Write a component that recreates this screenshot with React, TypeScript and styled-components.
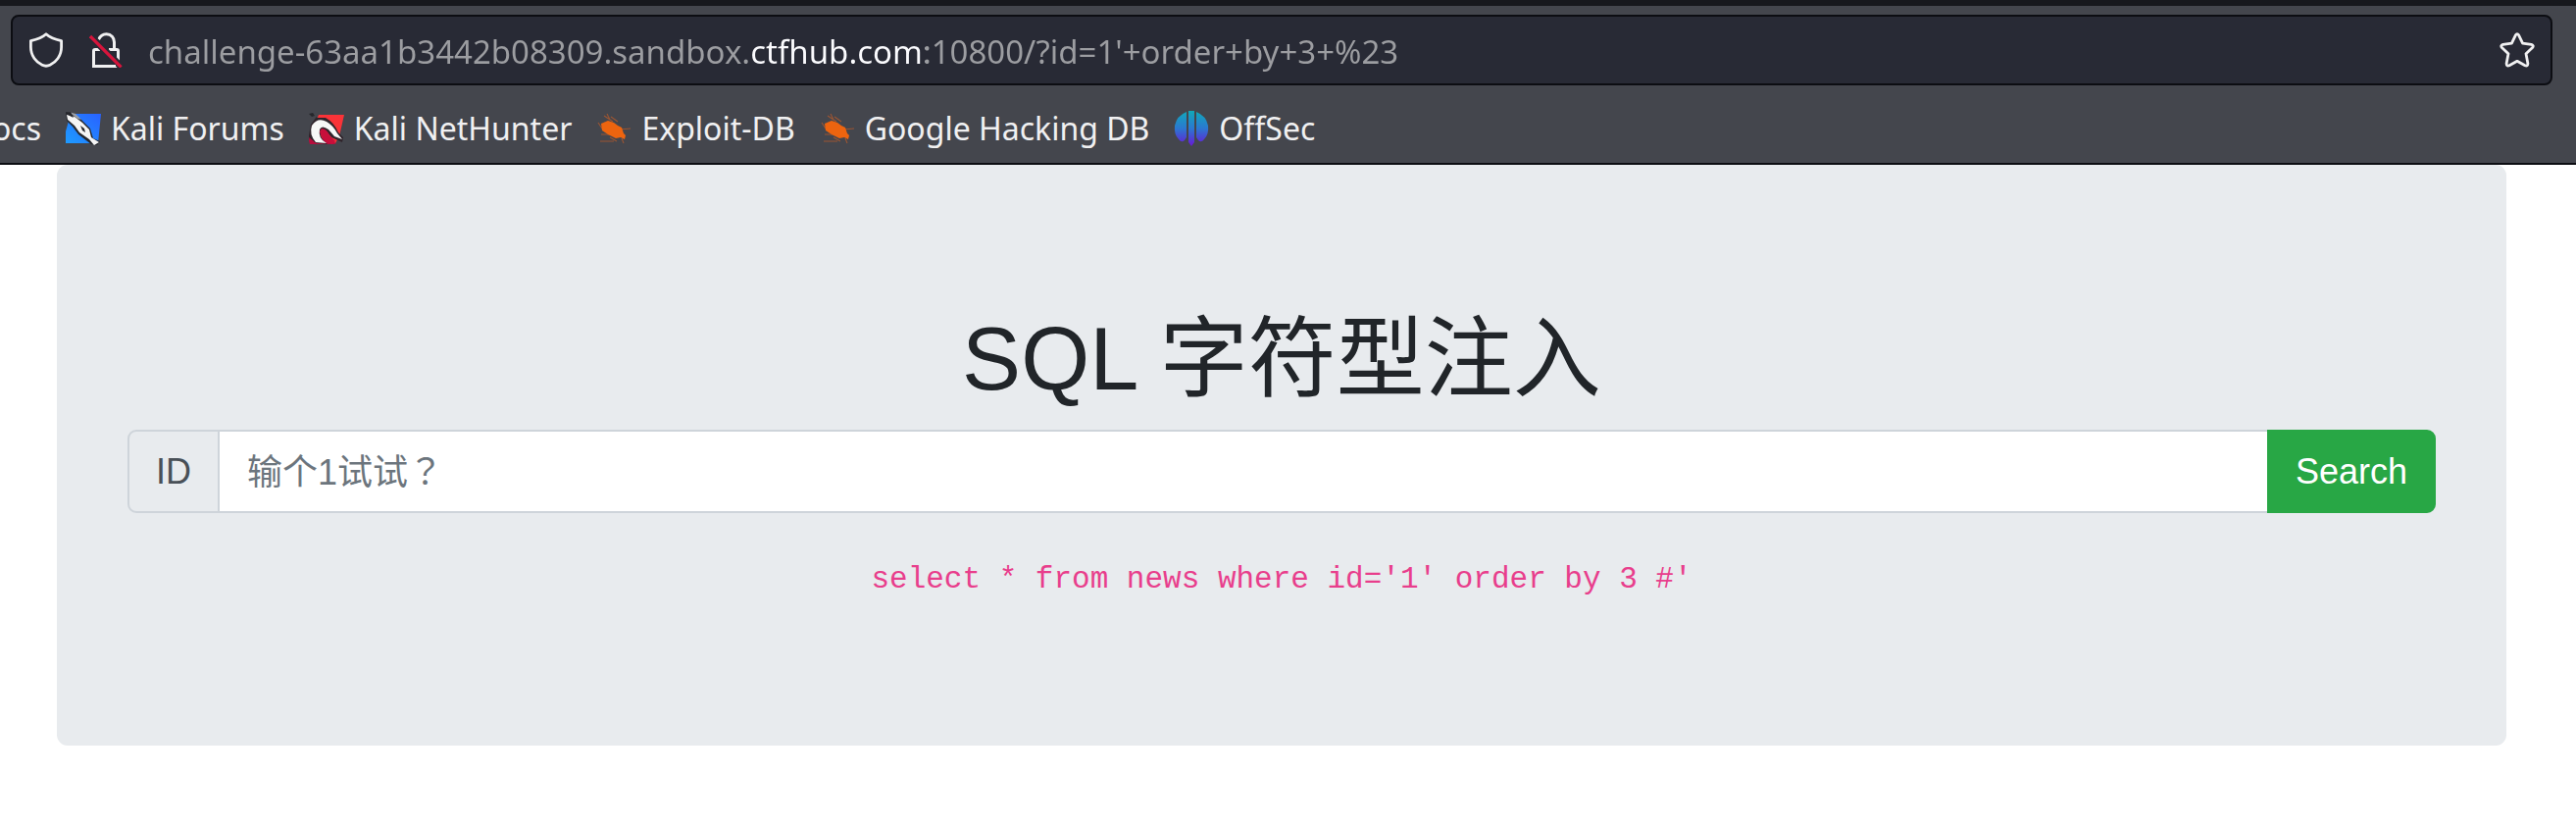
import React from "react";
import styled, { createGlobalStyle } from "styled-components";

const GlobalStyle = createGlobalStyle`
  * { box-sizing: border-box; }
  body {
    margin: 0;
    background: #ffffff;
    color: #212529;
    font-family: "Liberation Sans", "Noto Sans CJK SC", sans-serif;
    font-size: 36px;
    line-height: 54px;
  }
`;

const Chrome = styled.header`
  background: #44464d;
  border-top: 6px solid #17181d;
  border-bottom: 2px solid #0c0d12;
  color: #f0f0f1;
  font-family: "Noto Sans", sans-serif;
  line-height: 44px;
`;

const AddressBar = styled.div`
  display: flex;
  align-items: center;
  height: 72px;
  margin: 9px 24px 0 11px;
  padding: 0 16px;
  background: #282a35;
  border: 2px solid #0c0d12;
  border-radius: 8px;
  font-size: 33px;
`;

const IconButton = styled.button`
  display: flex;
  padding: 0;
  margin-right: 26px;
  border: 0;
  background: none;
  color: inherit;
  &:last-child { margin-right: 0; }
`;

const AddressInput = styled.input`
  flex: 1;
  min-width: 0;
  height: 48px;
  margin-left: -2px;
  padding: 2px 0 0;
  border: 0;
  outline: 0;
  font: inherit;
  color: transparent;
  background: linear-gradient(to right, #9c9da1 616px, #fbfbfe 616px, #fbfbfe 793px, #9c9da1 793px);
  background-clip: text;
  -webkit-background-clip: text;
`;

const BookmarkBar = styled.nav`
  display: flex;
  align-items: center;
  gap: 25px;
  height: 79px;
  overflow: hidden;
  padding-top: 8px;
  font-size: 32px;
`;

const Bookmark = styled.a<{ $cut?: boolean }>`
  display: flex;
  flex: none;
  align-items: center;
  justify-content: flex-end;
  gap: 10px;
  width: ${(p) => (p.$cut ? "42px" : "auto")};
  color: inherit;
  text-decoration: none;
  white-space: nowrap;
`;

const Page = styled.main`
  padding: 0 71px 0 58px;
`;

const Jumbotron = styled.section`
  padding: 144px 72px 142px;
  background: #e8ebee;
  border-radius: 11px;
  text-align: center;
`;

const Title = styled.h1`
  margin: 0 0 18px;
  font-size: 90px;
  font-weight: 400;
  line-height: 108px;
`;

const InputGroup = styled.form`
  display: flex;
  height: 85px;
  margin-bottom: 41px;
`;

const Addon = styled.label`
  display: flex;
  align-items: center;
  padding: 0 27px;
  background: #e8ebee;
  border: 2px solid #ced4da;
  border-radius: 9px 0 0 9px;
  color: #495057;
`;

const TextInput = styled.input`
  flex: 1;
  min-width: 0;
  margin: 0 -2px;
  padding: 2px 28px 0;
  background: #ffffff;
  border: 2px solid #ced4da;
  border-radius: 0;
  font: inherit;
  font-family: "Liberation Sans", "Noto Sans CJK TC", sans-serif;
  color: #495057;
  &::placeholder { color: #6c757d; opacity: 1; }
`;

const SearchButton = styled.button`
  z-index: 1;
  padding: 0 27px;
  background: #28a745;
  border: 2px solid #28a745;
  border-radius: 0 9px 9px 0;
  color: #ffffff;
  font: inherit;
`;

const Query = styled.code`
  display: block;
  color: #e83e8c;
  font-family: "Liberation Mono", monospace;
  font-size: 31px;
`;

const Icon = styled.svg.attrs({ width: 36, height: 36, "aria-hidden": true })`
  display: block;
  flex: none;
`;

const ShieldIcon = () => (
  <Icon viewBox="0 0 36 36" fill="none" stroke="currentColor" strokeWidth="2.8" strokeLinejoin="round">
    <path d="M18 1.8 C14 5.5 8 7.4 2.4 8.6 V15 C2.4 24 8 30.5 14 33.3 Q18 35.2 22 33.3 C28 30.5 33.6 24 33.6 15 V8.6 C28 7.4 22 5.5 18 1.8Z" />
  </Icon>
);

const LockIcon = () => (
  <Icon viewBox="0 0 36 36" fill="none" stroke="currentColor" strokeWidth="3">
    <path d="M9.5 7.5 C11 4 14 1.8 17.5 1.8 C22.5 1.8 25.5 5.5 25.5 10 V17.5" />
    <path d="M11 17.5 H6 Q4.5 17.5 4.5 19 V34.5 H29.5 V19 Q29.5 17.5 28 17.5 H20" />
    <path d="M2 4.5 L33 35.5" stroke="#282a35" strokeWidth="7" />
    <path d="M4.500 24 V34.500 H27" />
    <path d="M1 4 L32.500 35.500" stroke="#d7153c" strokeWidth="3.2" />
  </Icon>
);

const StarIcon = () => (
  <Icon viewBox="0 0 36 36" fill="none" stroke="currentColor" strokeWidth="2.8" strokeLinejoin="round">
    <path d="M16.4 2.8 Q18 .5 19.6 2.8 L23.6 11.2 L32.5 12.4 Q35.4 13.4 33.6 15.6 L27 21.8 L28.9 31.8 Q28.8 34.9 26 33.8 L18 29.3 L10 33.8 Q7.2 34.9 7.1 31.8 L9 21.8 L2.4 15.6 Q.6 13.4 3.5 12.4 L12.4 11.2Z" />
  </Icon>
);

const ForumsIcon = () => (
  <Icon viewBox="0 0 36 36">
    <defs>
      <linearGradient id="forums" x1="1" y1="0" x2="0" y2="1">
        <stop offset="0" stopColor="#2962ff" />
        <stop offset="1" stopColor="#1e9bff" />
      </linearGradient>
    </defs>
    <path d="M5 3 H36 L33 33 H0 V21Z" fill="url(#forums)" />
    <path d="M0 1 L5 2 L16 9 L25 18 L28 28 L35 31 L32 35 L26 34 L13 24 L7 16 L1 10Z" fill="#26282e" />
    <path d="M1 4 L9 6 L17 12 L24 19 L26 27 L34 32 L29 35 L24 29 L14 22 L9 15 L2 9Z" fill="#f5f5f5" />
    <path d="M3 1 L10 3 L16 9 L12 8Z" fill="#9b9fa7" />
    <path d="M0 2 L5 1 L8 7 L4 5Z M15 15 L19 18 L20 22 L17 20Z" fill="#25262b" />
  </Icon>
);

const NetHunterIcon = () => (
  <Icon viewBox="0 0 36 36">
    <path d="M10 4 H36 L31 26 L27 33 H2 L0 29Z" fill="#fa3338" />
    <path d="M0 30 L7 25 L28 33 L26 34 H1Z" fill="#b70d3d" />
    <path d="M0 3 L4 2 L8 7 L17 7 Q26 12 30 22 L35 27 L34 32 L23 27 L18 21 Q12 18 12 24 Q13 30 19 34 L8 33 L0 29Z" fill="#30242b" />
    <path d="M0 0 H10 L7 7 L2 14 L0 25Z" fill="#44464d" />
    <path d="M0 3 L4 2 L6 5 L3 6Z" fill="#25262b" />
    <path d="M7 32 Q0 24 3 15 Q9 6 18 11 Q25 15 29 23 L34 29 L26 26 L20 19 Q13 14 11 19 Q9 28 18 33Z" fill="#f7f7f7" />
    <path d="M13 18 Q18 18 21 25 L27 31 L24 34 L18 32 Q12 27 11 21Z" fill="#c80f3b" />
    <path d="M0 27 L5 31 V34 H1Z" fill="#b70d3d" />
  </Icon>
);

const BeetleIcon = () => (
  <Icon viewBox="0 0 36 36">
    <path d="M2 12 L6 18 M8 5 L17 11 M11 3 L14 9 M15 6 L22 11 M24 19 L35 18 M5 24 H14 M4 31 H18 M14 27 L21 31 M26 28 L28 33" fill="none" stroke="#9b5533" strokeWidth="1.1" />
    <path d="M5 13 L12 10 L18 12 L22 15 L26 17 L28 23 L30 25 L29 29 L25 27 L20 28 L12 24 L6 20Z" fill="#ed640f" />
  </Icon>
);

const OffSecIcon = () => (
  <Icon viewBox="0 0 36 36">
    <defs>
      <linearGradient id="offsec" x1="0" y1="0" x2="0" y2="36" gradientUnits="userSpaceOnUse">
        <stop offset="0" stopColor="#11a9b9" />
        <stop offset=".5" stopColor="#2b77d1" />
        <stop offset="1" stopColor="#6918d5" />
      </linearGradient>
    </defs>
    <path d="M13 1 V27 L11 30 Q8 33 5 29 Q0 24 1 15 Q3 5 13 1Z M23 1 V27 L25 30 Q28 33 31 29 Q36 24 35 15 Q33 5 23 1Z M15 0 H21 V32 L18 36 L15 32Z" fill="url(#offsec)" />
  </Icon>
);

const bookmarks = [
  { name: "Kali Forums", Mark: ForumsIcon },
  { name: "Kali NetHunter", Mark: NetHunterIcon },
  { name: "Exploit-DB", Mark: BeetleIcon },
  { name: "Google Hacking DB", Mark: BeetleIcon },
  { name: "OffSec", Mark: OffSecIcon },
];

export default function App() {
  return (
    <>
      <GlobalStyle />
      <Chrome>
        <AddressBar>
          <IconButton type="button" aria-label="Tracking protection"><ShieldIcon /></IconButton>
          <IconButton type="button" aria-label="Connection not secure"><LockIcon /></IconButton>
          <AddressInput
            aria-label="Address"
            spellCheck={false}
            defaultValue="challenge-63aa1b3442b08309.sandbox.ctfhub.com:10800/?id=1'+order+by+3+%23"
          />
          <IconButton type="button" aria-label="Bookmark this page"><StarIcon /></IconButton>
        </AddressBar>
        <BookmarkBar aria-label="Bookmarks">
          <Bookmark href="#" $cut>ocs</Bookmark>
          {bookmarks.map(({ name, Mark }) => (
            <Bookmark href="#" key={name}><Mark />{name}</Bookmark>
          ))}
        </BookmarkBar>
      </Chrome>
      <Page>
        <Jumbotron>
          <Title>SQL 字符型注入</Title>
          <InputGroup onSubmit={(e) => e.preventDefault()}>
            <Addon htmlFor="record-id">ID</Addon>
            <TextInput id="record-id" name="id" placeholder="输个1试试？" />
            <SearchButton type="submit">Search</SearchButton>
          </InputGroup>
          <Query>select * from news where id='1' order by 3 #'</Query>
        </Jumbotron>
      </Page>
    </>
  );
}
